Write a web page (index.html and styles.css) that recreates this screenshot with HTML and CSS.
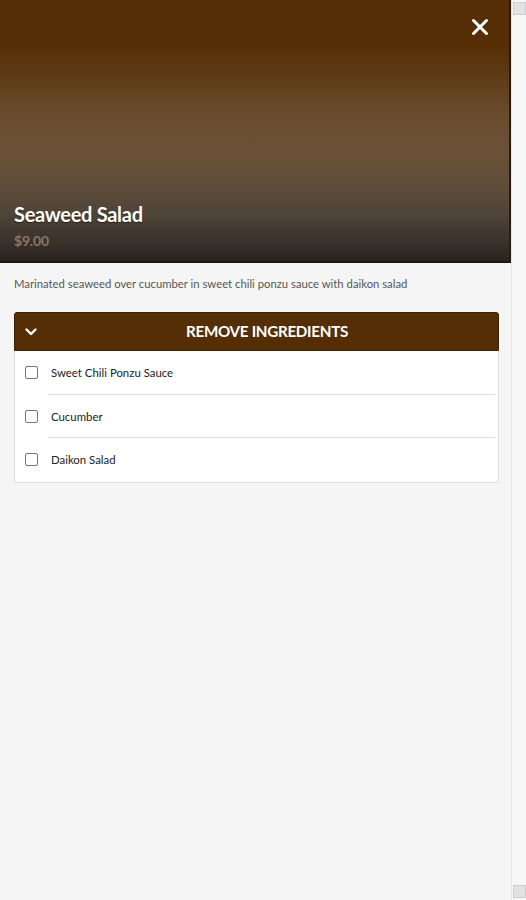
FILE: index.html
```html
<!DOCTYPE html>
<html>
<head>
<meta charset="utf-8">
<link rel="stylesheet" href="styles.css">
</head>
<body>
<div class="frame">
  <main class="modal">
    <header class="hero">
      <button class="close" aria-label="Close">
        <svg width="18" height="18" viewBox="0 0 18 18"><path d="M2.5 2.5 L15.5 15.5 M15.5 2.5 L2.5 15.5" stroke="#fff" stroke-width="3" stroke-linecap="round"/></svg>
      </button>
      <div class="hero-text">
        <h1 class="title">Seaweed Salad</h1>
        <div class="price">$9.00</div>
      </div>
    </header>
    <p class="desc">Marinated seaweed over cucumber in sweet chili ponzu sauce with daikon salad</p>
    <section class="card">
      <div class="card-head">
        <svg class="chev" width="12" height="8" viewBox="0 0 12 8"><path d="M1.5 1.5 L6 6 L10.5 1.5" stroke="#fff" stroke-width="2.4" fill="none" stroke-linecap="round" stroke-linejoin="round"/></svg>
        <span class="head-title">REMOVE INGREDIENTS</span>
      </div>
      <label class="row"><span class="box"></span><span class="lbl">Sweet Chili Ponzu Sauce</span></label>
      <label class="row"><span class="box"></span><span class="lbl">Cucumber</span></label>
      <label class="row last"><span class="box"></span><span class="lbl">Daikon Salad</span></label>
    </section>
  </main>
  <div class="scrollbar">
    <span class="arrow up"></span>
    <span class="thumb"></span>
    <span class="arrow down"></span>
  </div>
</div>
</body>
</html>
```
FILE: styles.css
```css
* { box-sizing: border-box; }
html, body { margin: 0; padding: 0; }
body {
  font-family: Lato, "Noto Sans", sans-serif;
  background: #f5f5f5;
  width: 526px;
  height: 900px;
  overflow: hidden;
}
.frame {
  display: flex;
  height: 900px;
}
.modal {
  width: 511px;
  flex: none;
  background: #f5f5f5;
}
.hero {
  position: relative;
  height: 263px;
  display: flex;
  align-items: flex-end;
  background: linear-gradient(to bottom,
    #552e06 0px,
    #552e06 45px,
    #5f3d17 80px,
    #6a4c2e 115px,
    #6c5137 150px,
    #5f4d3b 185px,
    #4e4438 215px,
    #3a332c 240px,
    #29241f 261px);
  border-right: 2px solid #2a1b10;
  border-bottom: 2px solid #1a1714;
}
.close {
  position: absolute;
  top: 16px;
  right: 18px;
  width: 22px;
  height: 22px;
  padding: 2px;
  border: 0;
  background: none;
  display: flex;
  align-items: center;
  justify-content: center;
}
.hero-text {
  padding: 0 0 11px 14px;
}
.title {
  margin: 0;
  font-size: 20px;
  font-weight: 700;
  color: #fff;
  letter-spacing: -0.3px;
  line-height: 24px;
  text-shadow: 0 1px 1px rgba(0,0,0,0.5);
}
.price {
  margin-top: 6px;
  font-size: 14px;
  font-weight: 700;
  color: #8e736a;
  line-height: 18px;
  letter-spacing: -0.2px;
}
.desc {
  margin: 0;
  padding: 13px 14px 0;
  font-size: 11.3px;
  color: #555;
  line-height: 16px;
}
.card {
  margin: 20px 12px 0 14px;
  background: #fff;
  border: 1px solid #dcdcdc;
  border-top: 0;
  border-radius: 3px;
}
.card-head {
  height: 39px;
  background: #552e06;
  border: 1px solid #3c2006;
  border-radius: 3px 3px 0 0;
  margin: 0 -1px;
  display: flex;
  align-items: center;
  padding: 0 12px 2px 10px;
}
.chev { flex: none; margin-top: 2px; }
.head-title {
  flex: 1;
  text-align: center;
  color: #fff;
  font-weight: 700;
  font-size: 15.2px;
  letter-spacing: -0.3px;
  padding-left: 11px;
}
.row {
  height: 43.5px;
  display: flex;
  align-items: center;
  padding-left: 10px;
  position: relative;
}
.row::after {
  content: "";
  position: absolute;
  left: 33px;
  right: 3px;
  bottom: 0;
  height: 1px;
  background: #dedede;
}
.row.last::after { display: none; }
.box {
  width: 13px;
  height: 13px;
  border: 1.5px solid #777;
  border-radius: 2px;
  background: #fff;
  flex: none;
}
.lbl {
  margin-left: 13px;
  font-size: 11.4px;
  color: #222;
}
.scrollbar {
  width: 15px;
  flex: none;
  background: #f7f7f7;
  border-left: 1px solid #e6e6e6;
  display: flex;
  flex-direction: column;
  align-items: center;
}
.arrow {
  width: 13px;
  height: 13px;
  margin: 2px 0;
  background: #e2e2e2;
  border: 1px solid #cfcfcf;
}
.thumb { flex: 1; }
```
